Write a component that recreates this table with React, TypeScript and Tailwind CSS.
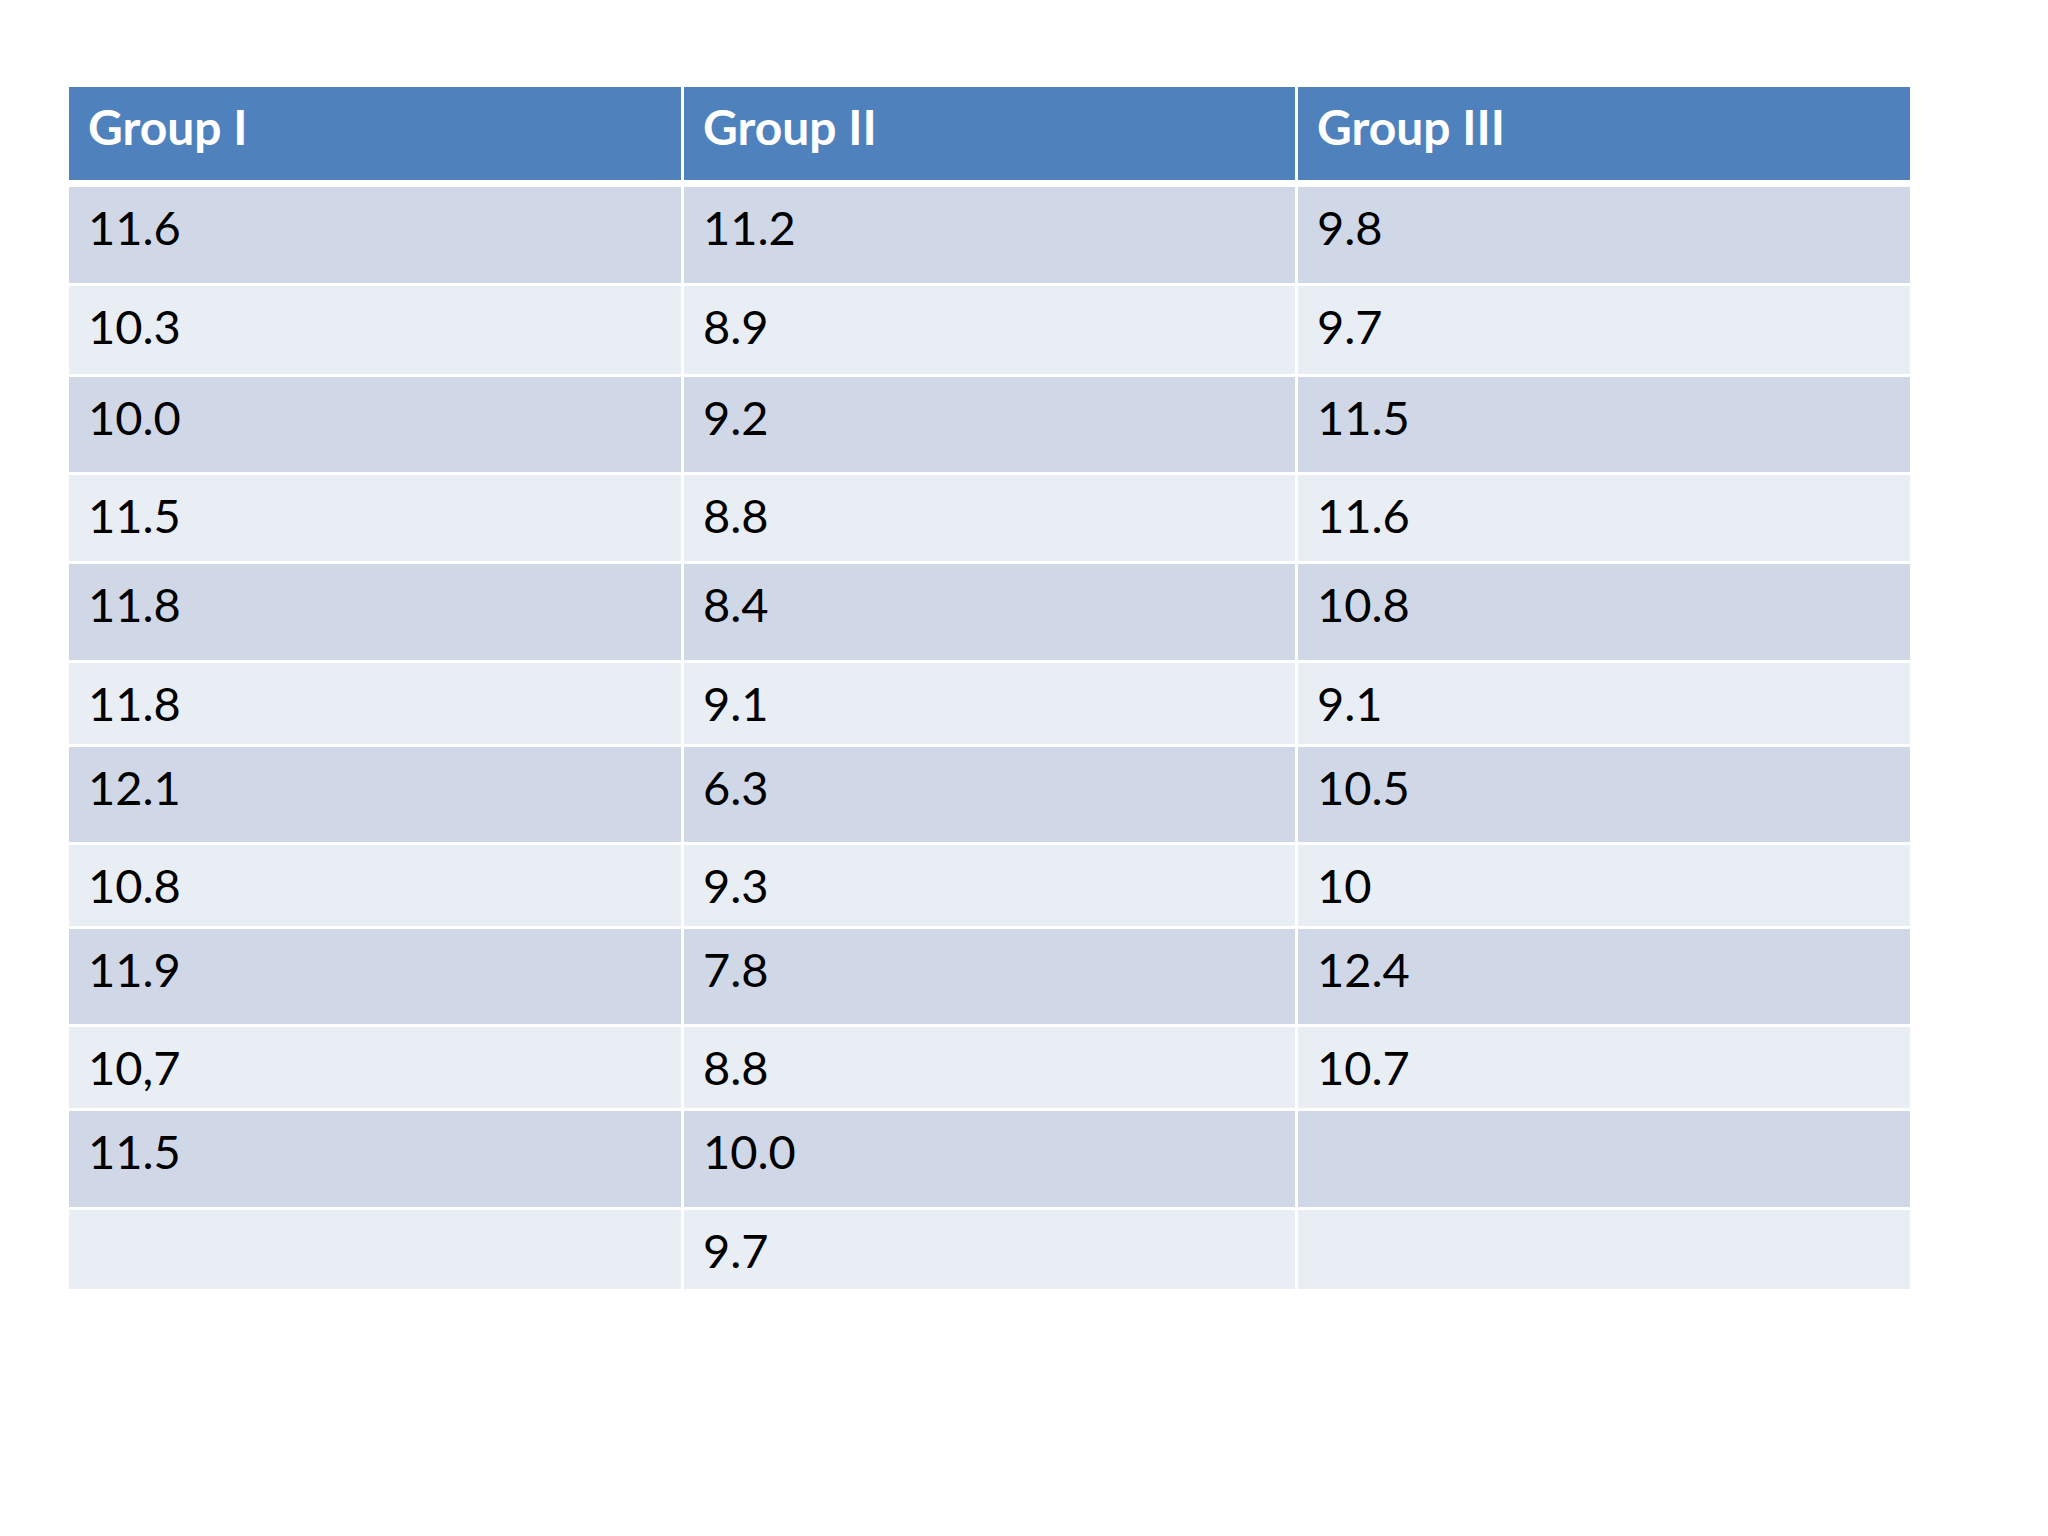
import React from "react";

const rows: { h: number; cells: string[] }[] = [
  { h: 96, cells: ["11.6", "11.2", "9.8"] },
  { h: 88, cells: ["10.3", "8.9", "9.7"] },
  { h: 95, cells: ["10.0", "9.2", "11.5"] },
  { h: 86, cells: ["11.5", "8.8", "11.6"] },
  { h: 96, cells: ["11.8", "8.4", "10.8"] },
  { h: 81, cells: ["11.8", "9.1", "9.1"] },
  { h: 95, cells: ["12.1", "6.3", "10.5"] },
  { h: 81, cells: ["10.8", "9.3", "10"] },
  { h: 95, cells: ["11.9", "7.8", "12.4"] },
  { h: 81, cells: ["10,7", "8.8", "10.7"] },
  { h: 96, cells: ["11.5", "10.0", ""] },
  { h: 79, cells: ["", "9.7", ""] },
];

export default function App() {
  return (
    <div
      className="w-[2048px] h-[1536px] bg-white"
      style={{ fontFamily: "Lato, 'Open Sans', sans-serif" }}
    >
      <div className="pt-[87px] pl-[69px]">
        <div className="w-[1841px] flex flex-col">
          <div className="grid grid-cols-[612px_611px_612px] gap-x-[3px] h-[93px]">
            {["Group I", "Group II", "Group III"].map((t) => (
              <div
                key={t}
                className="bg-[#4f81bd] text-white font-bold text-[48px] leading-none pl-[19px] pt-[16px]"
              >
                {t}
              </div>
            ))}
          </div>
          <div className="h-[7px]" />
          <div className="flex flex-col gap-y-[3px]">
            {rows.map((r, i) => (
              <div
                key={i}
                className="grid grid-cols-[612px_611px_612px] gap-x-[3px]"
                style={{ height: r.h }}
              >
                {r.cells.map((c, j) => (
                  <div
                    key={j}
                    className={
                      (i % 2 === 0 ? "bg-[#d0d8e8]" : "bg-[#e9edf4]") +
                      " text-black text-[47px] leading-none pl-[19px] pt-[17px]"
                    }
                  >
                    {c}
                  </div>
                ))}
              </div>
            ))}
          </div>
        </div>
      </div>
    </div>
  );
}
